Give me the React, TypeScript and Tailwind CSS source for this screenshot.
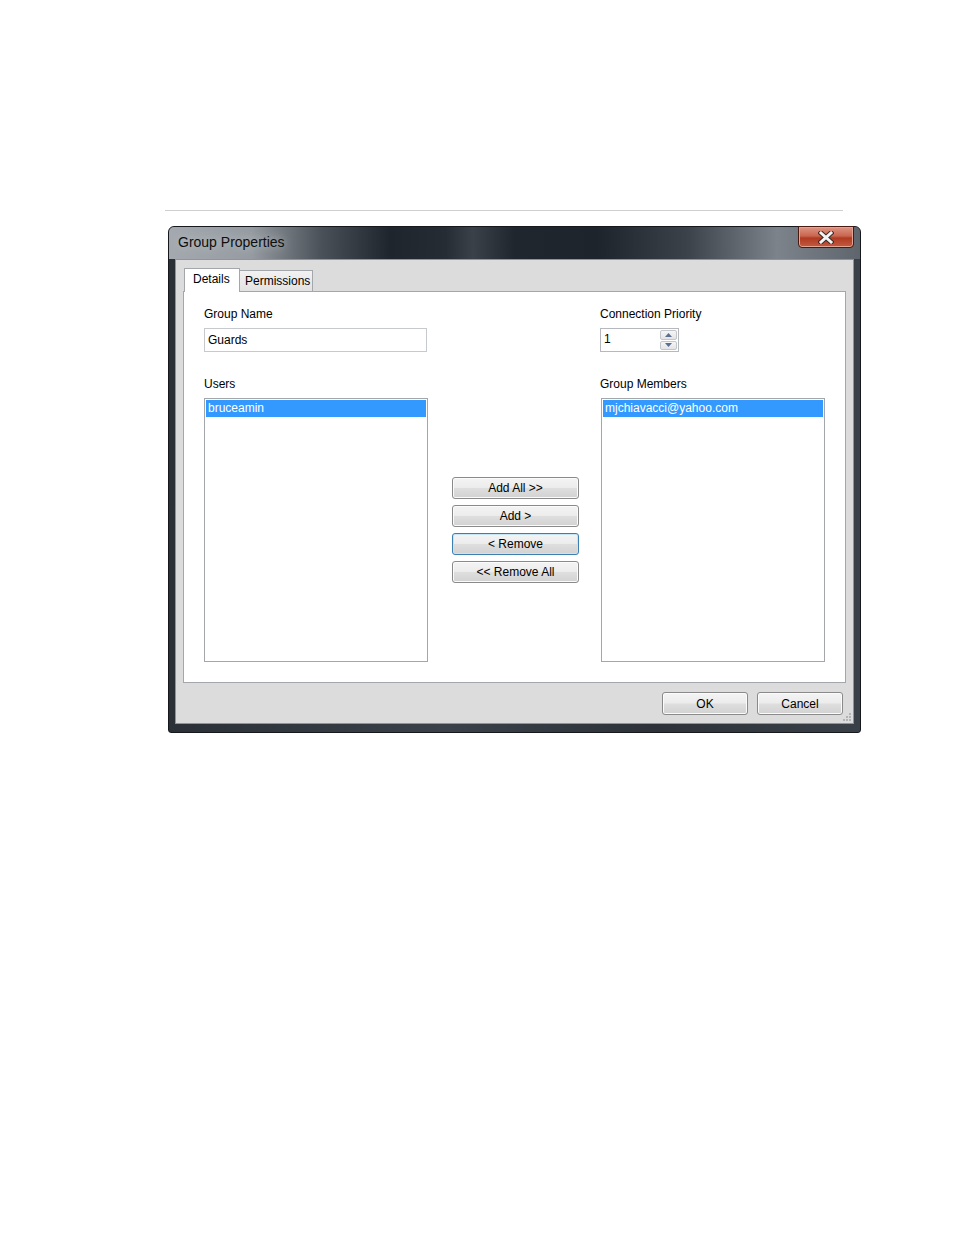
import React from "react"

function WinButton({
  label,
  focused = false,
  className = "",
}: {
  label: string
  focused?: boolean
  className?: string
}) {
  return (
    <div
      className={`flex items-center justify-center rounded-[3px] border text-[12px] leading-[14px] text-black ${
        focused
          ? "border-[#3c7fb1] shadow-[inset_0_0_0_1px_#c6e6f7]"
          : "border-[#8a8a8a] shadow-[inset_0_0_0_1px_#fbfbfb]"
      } bg-[linear-gradient(to_bottom,#f4f4f4_0%,#ececec_48%,#dedede_52%,#d2d2d2_100%)] ${className}`}
    >
      {label}
    </div>
  )
}

function ListBox({ item }: { item: string }) {
  return (
    <div className="h-[264px] w-[224px] border border-[#a3a7ac] bg-white p-px">
      <div className="h-[17px] bg-[#3399ff] pl-[2px] text-[12px] leading-[17px] text-white">
        {item}
      </div>
    </div>
  )
}

function CloseGlyph() {
  return (
    <svg width="16" height="13" viewBox="0 0 16 13">
      <path d="M3 2 L13 11 M13 2 L3 11" stroke="#3a2a26" strokeWidth="5" strokeLinecap="square" />
      <path d="M3 2 L13 11 M13 2 L3 11" stroke="#f4f4f4" strokeWidth="3" strokeLinecap="square" />
    </svg>
  )
}

export default function App() {
  return (
    <div className="min-h-[1235px] bg-white pt-[210px] font-['Liberation_Sans',Arial,sans-serif]">
      <div className="ml-[165px] h-px w-[678px] bg-[#cfcfcf]" />

      {/* Dialog window */}
      <div className="ml-[168px] mt-[15px] flex h-[507px] w-[693px] flex-col rounded-t-[6px] rounded-b-[3px] border border-[#15191d] bg-[linear-gradient(to_right,#2a3036_0%,#3a4148_40%,#2c3238_70%,#3a4047_100%)]">
        {/* Title bar */}
        <div className="flex h-[32px] items-start justify-between rounded-t-[5px] bg-[linear-gradient(to_right,#a3a9ae_0%,#959ba1_12%,#4a5158_22%,#1f252c_32%,#262c33_40%,#3a4148_44%,#20262d_50%,#1e242b_62%,#3b4249_75%,#7c838a_88%,#5e656c_100%)] pr-[6px]">
          <div className="ml-[9px] mt-[7px] text-[14px] leading-[17px] text-[#0e0e0e] [text-shadow:0_0_8px_#c8cdd1]">
            Group Properties
          </div>
          <div className="-mt-px flex h-[22px] w-[56px] items-center justify-center rounded-b-[4px] border border-[#4a1a10] bg-[linear-gradient(to_bottom,#dd9583_0%,#c96650_45%,#b03a22_55%,#c45a40_100%)] shadow-[inset_0_0_0_1px_#e0a595]">
            <CloseGlyph />
          </div>
        </div>

        {/* Client area */}
        <div className="flex flex-1 flex-col px-[6px] pb-[8px]">
          <div className="relative flex flex-1 flex-col border border-[#8e949a] bg-[#dcdcdc] px-[7px] pt-[7px]">
            {/* Tabs */}
            <div className="flex h-[24px] items-end pl-px">
              <div className="relative z-10 -mb-px flex h-[24px] w-[56px] items-start border border-b-0 border-[#a3a7ac] bg-white pl-[8px] pt-[3px] text-[12px] leading-[14px] text-black">
                Details
              </div>
              <div className="-ml-px flex h-[21px] w-[74px] items-start border border-b-0 border-[#a3a7ac] bg-[linear-gradient(to_bottom,#f2f2f2,#e2e2e2)] pl-[5px] pt-[3px] text-[12px] leading-[14px] text-black">
                Permissions
              </div>
            </div>

            {/* Tab panel */}
            <div className="flex h-[392px] border border-[#a3a7ac] bg-white pl-[20px] pt-[15px] text-[12px] leading-[14px] text-black">
              <div className="flex w-[224px] flex-col">
                <div>Group Name</div>
                <div className="mt-[7px] h-[24px] w-[223px] border border-[#c6cacf] bg-white pl-[3px] leading-[22px]">
                  Guards
                </div>
                <div className="mt-[25px]">Users</div>
                <div className="mt-[7px]">
                  <ListBox item="bruceamin" />
                </div>
              </div>

              <div className="ml-[24px] flex w-[127px] flex-col gap-[6px] pt-[170px]">
                <WinButton label="Add All >>" className="h-[22px]" />
                <WinButton label="Add >" className="h-[22px]" />
                <WinButton label="< Remove" focused className="h-[22px]" />
                <WinButton label="<< Remove All" className="h-[22px]" />
              </div>

              <div className="ml-[21px] flex flex-col">
                <div>Connection Priority</div>
                <div className="mt-[7px] flex h-[24px] w-[79px] border border-[#b5b9be] bg-white">
                  <div className="flex-1 pl-[3px] leading-[20px]">1</div>
                  <div className="my-px mr-px flex w-[17px] flex-col gap-px">
                    <div className="flex flex-1 items-center justify-center rounded-[2px] border border-[#c3c7cc] bg-[linear-gradient(to_bottom,#f6f6f6,#e4e4e4)]">
                      <svg width="7" height="4" viewBox="0 0 7 4">
                        <path d="M3.5 0 L7 4 L0 4 Z" fill="#5a6e96" />
                      </svg>
                    </div>
                    <div className="flex flex-1 items-center justify-center rounded-[2px] border border-[#c3c7cc] bg-[linear-gradient(to_bottom,#f6f6f6,#e4e4e4)]">
                      <svg width="7" height="4" viewBox="0 0 7 4">
                        <path d="M0 0 L7 0 L3.5 4 Z" fill="#5a6e96" />
                      </svg>
                    </div>
                  </div>
                </div>
                <div className="mt-[25px]">Group Members</div>
                <div className="ml-px mt-[7px]">
                  <ListBox item="mjchiavacci@yahoo.com" />
                </div>
              </div>
            </div>

            {/* Dialog buttons */}
            <div className="mt-[9px] flex justify-end gap-[9px] pr-[3px]">
              <WinButton label="OK" className="h-[23px] w-[86px]" />
              <WinButton label="Cancel" className="h-[23px] w-[86px]" />
            </div>

            {/* Size grip */}
            <svg className="absolute bottom-[1px] right-[1px]" width="10" height="10" viewBox="0 0 10 10">
              {[
                [8, 2],
                [8, 5],
                [5, 5],
                [8, 8],
                [5, 8],
                [2, 8],
              ].map(([x, y]) => (
                <rect key={`${x}-${y}`} x={x - 1} y={y - 1} width="2" height="2" fill="#b0b4b8" />
              ))}
            </svg>
          </div>
        </div>
      </div>
    </div>
  )
}
